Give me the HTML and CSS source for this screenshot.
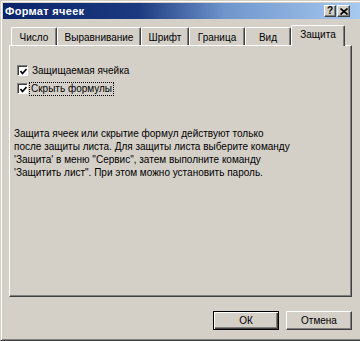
FILE: index.html
```html
<!DOCTYPE html>
<html lang="ru">
<head>
<meta charset="utf-8">
<title>Формат ячеек</title>
<link rel="stylesheet" href="styles.css">
</head>
<body>
<div class="window">
  <div class="titlebar">
    <span class="title">Формат ячеек</span>
    <div class="tb-btns">
      <div class="tb-btn"><span class="q">?</span></div>
      <div class="tb-btn">
        <svg width="8" height="7" viewBox="0 0 8 7"><path d="M0.5 0.5 L7.5 6.5 M7.5 0.5 L0.5 6.5" stroke="#000" stroke-width="1.6" fill="none"/></svg>
      </div>
    </div>
  </div>
  <div class="content">
    <div class="tabs">
      <div class="tab t1">Число</div>
      <div class="tab t2">Выравнивание</div>
      <div class="tab t3">Шрифт</div>
      <div class="tab t4">Граница</div>
      <div class="tab t5">Вид</div>
      <div class="tab t6 active">Защита</div>
    </div>
    <div class="panel">
      <div class="checks">
        <div class="check-row">
          <span class="box"><svg width="7" height="7" viewBox="0 0 7 7"><path d="M0.5 3 L2.5 5.5 L6.5 1" stroke="#000" stroke-width="1.7" fill="none"/></svg></span>
          <span class="label">Защищаемая ячейка</span>
        </div>
        <div class="check-row">
          <span class="box"><svg width="7" height="7" viewBox="0 0 7 7"><path d="M0.5 3 L2.5 5.5 L6.5 1" stroke="#000" stroke-width="1.7" fill="none"/></svg></span>
          <span class="label focus">Скрыть формулы</span>
        </div>
      </div>
      <p class="note">Защита ячеек или скрытие формул действуют только<br>после защиты листа. Для защиты листа выберите команду<br>'Защита' в меню "Сервис", затем выполните команду<br>'Защитить лист". При этом можно установить пароль.</p>
    </div>
    <div class="actions">
      <div class="btn default"><span>ОК</span></div>
      <div class="btn"><span>Отмена</span></div>
    </div>
  </div>
</div>
</body>
</html>
```
FILE: styles.css
```css
html, body {
  margin: 0;
  padding: 0;
  width: 360px;
  height: 341px;
  overflow: hidden;
  background: #d4d0c8;
  font-family: "Liberation Sans", Arial, sans-serif;
  font-size: 10px;
  color: #000;
}

.window {
  box-sizing: border-box;
  width: 360px;
  height: 341px;
  border-left: 1px solid #d4d0c8;
  border-top: 1px solid #d4d0c8;
  border-bottom: 1px solid #404040;
  box-shadow: inset 1px 1px 0 #ffffff, inset 0 -1px 0 #808080;
  padding: 2px 0 2px 2px;
  display: flex;
  flex-direction: column;
}

.titlebar {
  height: 16px;
  flex: none;
  display: flex;
  align-items: center;
  justify-content: space-between;
  background: linear-gradient(to right, #0a246a 0%, #1c3a80 38%, #6f95cc 62%, #a6caf0 100%);
  padding-left: 2px;
}

.title {
  color: #fff;
  font-weight: bold;
  font-size: 11px;
  letter-spacing: 0.3px;
}

.tb-btns {
  display: flex;
  gap: 1px;
  margin-right: 10px;
}

.tb-btn {
  box-sizing: border-box;
  width: 12px;
  height: 12px;
  background: #d4d0c8;
  border-top: 1px solid #fff;
  border-left: 1px solid #fff;
  border-right: 1px solid #404040;
  border-bottom: 1px solid #404040;
  box-shadow: inset -1px -1px 0 #808080;
  display: flex;
  align-items: center;
  justify-content: center;
}
.tb-btn + .tb-btn { width: 13px; }

.q {
  font-weight: bold;
  font-size: 10px;
  line-height: 10px;
}

.content {
  flex: 1;
  display: flex;
  flex-direction: column;
  padding: 6px 8px 0 6px;
}

.tabs {
  height: 20px;
  display: flex;
  align-items: flex-end;
  padding-left: 2px;
  position: relative;
  z-index: 1;
}

.tab {
  box-sizing: border-box;
  height: 18px;
  border-top: 1px solid #fff;
  border-left: 1px solid #fff;
  border-right: 1px solid #404040;
  box-shadow: inset -1px 0 0 #808080;
  border-top-left-radius: 2px;
  border-top-right-radius: 2px;
  display: flex;
  align-items: center;
  justify-content: center;
  padding-top: 1px;
  white-space: nowrap;
}

.t1 { width: 46px; }
.t2 { width: 84px; }
.t3 { width: 48px; }
.t4 { width: 56px; }
.t5 { width: 46px; }
.t6 { width: 54px; }

.tab.active {
  height: 21px;
  margin-bottom: -1px;
  background: #d4d0c8;
  padding-top: 0;
  padding-bottom: 3px;
}

.panel {
  box-sizing: border-box;
  height: 252px;
  flex: none;
  border-top: 1px solid #fff;
  border-left: 1px solid #fff;
  border-right: 1px solid #404040;
  border-bottom: 1px solid #404040;
  box-shadow: inset -1px -1px 0 #808080;
  padding: 19px 0 0 7px;
}

.checks {
  display: flex;
  flex-direction: column;
  gap: 7px;
}

.check-row {
  display: flex;
  align-items: center;
  gap: 4px;
  height: 11px;
}

.box {
  box-sizing: border-box;
  width: 11px;
  height: 11px;
  background: #fff;
  border-top: 1px solid #808080;
  border-left: 1px solid #808080;
  border-right: 1px solid #fff;
  border-bottom: 1px solid #fff;
  box-shadow: inset 1px 1px 0 #404040;
  display: flex;
  align-items: center;
  justify-content: center;
  padding: 1px 0 0 1px;
}

.label {
  line-height: 12px;
}

.focus {
  outline: 1px dotted #000;
  outline-offset: 0;
  padding: 0 1px;
  margin-left: -2px;
}

.note {
  margin: 33px 0 0 -3px;
  line-height: 13px;
}

.actions {
  display: flex;
  justify-content: flex-end;
  gap: 7px;
  margin-top: 14px;
}

.btn {
  box-sizing: border-box;
  width: 66px;
  height: 19px;
  background: #d4d0c8;
  border-top: 1px solid #fff;
  border-left: 1px solid #fff;
  border-right: 1px solid #404040;
  border-bottom: 1px solid #404040;
  box-shadow: inset -1px -1px 0 #808080;
  display: flex;
  align-items: center;
  justify-content: center;
}

.btn.default {
  border: 1px solid #000;
  box-shadow: inset 1px 1px 0 #fff, inset -1px -1px 0 #404040, inset -2px -2px 0 #808080;
}
```
